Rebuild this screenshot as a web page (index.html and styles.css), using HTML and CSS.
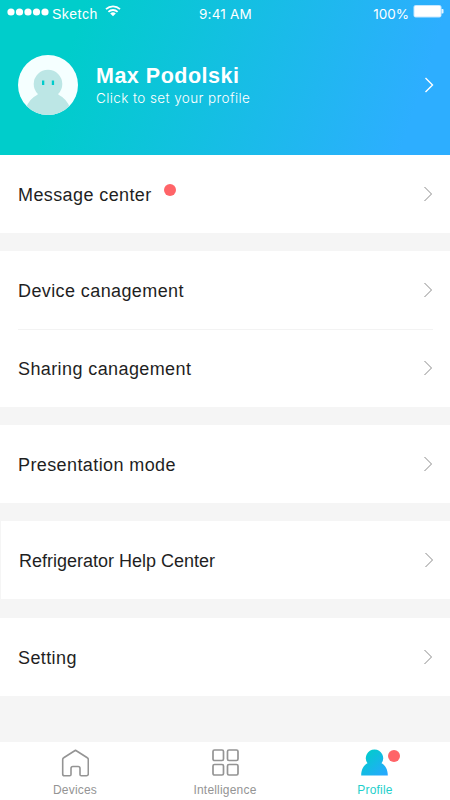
FILE: index.html
```
<!DOCTYPE html>
<html lang="en">

<head>
    <meta charset="utf-8">
    <title>Profile</title>
    <link rel="stylesheet" href="styles.css">
</head>

<body>
    <svg class="defs" width="0" height="0">
        <symbol id="arrow" viewBox="0 0 10 16">
            <path d="M1.500 1l7 7-7 7" fill="none" stroke="currentColor" />
        </symbol>
    </svg>

    <header class="header">
        <div class="status-bar">
            <div class="carrier">
                <svg width="42" height="8" viewBox="0 0 42 8" fill="#fff">
                    <circle cx="4" cy="4" r="3.6" />
                    <circle cx="12.5" cy="4" r="3.6" />
                    <circle cx="21" cy="4" r="3.6" />
                    <circle cx="29.5" cy="4" r="3.6" />
                    <circle cx="38" cy="4" r="3.6" />
                </svg>
                <span class="carrier-name">Sketch</span>
                <svg class="wifi" width="16" height="12" viewBox="0 0 16 12">
                    <path d="M1 4.1a10.3 10.3 0 0 1 14 0M3.4 6.8a6.8 6.8 0 0 1 9.2 0" fill="none" stroke="#fff" stroke-width="1.8" />
                    <path d="M5.2 8.6a4.2 4.2 0 0 1 5.6 0L8 11.3z" fill="#fff" />
                </svg>
            </div>
            <span class="time">9:41 AM</span>
            <div class="power">
                <span class="percent">100%</span>
                <svg width="31" height="13" viewBox="0 0 31 13">
                    <rect x="1" y=".5" width="27" height="11.5" rx="1.5" fill="#fff" stroke="#c5e7ff" />
                    <path d="M28.5 4h1.2q.8 0 .8.8v2.9q0 .8-.8.8h-1.2z" fill="#e3f4ff" />
                </svg>
            </div>
        </div>

        <div class="user">
            <svg class="avatar" width="60" height="60" viewBox="0 0 60 60">
                <clipPath id="round"><circle cx="30" cy="30" r="30" /></clipPath>
                <circle cx="30" cy="30" r="30" fill="#f5ffff" />
                <g clip-path="url(#round)" fill="#bce6e5">
                    <circle cx="30" cy="29" r="14.3" />
                    <path d="M19 40q2-1 1-3h20q-1 2 1 3 8 4 11 13v7H8v-7q3-9 11-13z" />
                </g>
                <path d="M24 25.500h2.300v4.500H24zM33.800 25.500h2.300v4.500h-2.300z" fill="#00cccb" />
            </svg>
            <div class="user-text">
                <h1>Max Podolski</h1>
                <p>Click to set your profile</p>
            </div>
            <svg class="arrow" width="10" height="16"><use href="#arrow" /></svg>
        </div>
    </header>

    <main class="menu">
        <section class="group">
            <div class="row">
                <span>Message center</span>
                <i class="dot"></i>
                <svg class="arrow" width="10" height="16"><use href="#arrow" /></svg>
            </div>
        </section>
        <section class="group">
            <div class="row">
                <span>Device canagement</span>
                <svg class="arrow" width="10" height="16"><use href="#arrow" /></svg>
            </div>
            <div class="row">
                <span>Sharing canagement</span>
                <svg class="arrow" width="10" height="16"><use href="#arrow" /></svg>
            </div>
        </section>
        <section class="group">
            <div class="row">
                <span>Presentation mode</span>
                <svg class="arrow" width="10" height="16"><use href="#arrow" /></svg>
            </div>
        </section>
        <section class="group help">
            <div class="row">
                <span>Refrigerator Help Center</span>
                <svg class="arrow" width="10" height="16"><use href="#arrow" /></svg>
            </div>
        </section>
        <section class="group">
            <div class="row">
                <span>Setting</span>
                <svg class="arrow" width="10" height="16"><use href="#arrow" /></svg>
            </div>
        </section>
    </main>

    <nav class="tabs">
        <div class="tab">
            <svg width="28" height="28" viewBox="0 0 28 28" fill="none" stroke="#949494" stroke-width="1.6" stroke-linejoin="round">
                <path d="M14.5 1.3L26.3 8.8q1 .6 1 1.7v14.4q0 1.8-1.8 1.8h-5.2q-1.3 0-1.3-1.3v-6q0-1.9-1.9-1.9h-5.200q-1.900 0-1.900 1.900v6q0 1.300-1.300 1.300H3.500q-1.800 0-1.800-1.800V10.500q0-1.100 1-1.700z" />
            </svg>
            <span>Devices</span>
        </div>
        <div class="tab">
            <svg width="28" height="28" viewBox="0 0 28 28" fill="none" stroke="#949494" stroke-width="1.7">
                <rect x="2" y="1" width="10.5" height="10.5" rx="1.5" />
                <rect x="16.5" y="1" width="10.5" height="10.5" rx="1.5" />
                <rect x="2" y="15.5" width="10.5" height="10.5" rx="1.5" />
                <rect x="16.5" y="15.5" width="10.5" height="10.5" rx="1.5" />
            </svg>
            <span>Intelligence</span>
        </div>
        <div class="tab active">
            <svg width="28" height="28" viewBox="0 0 28 28">
                <linearGradient id="person" x1="0.1" y1="0.1" x2="0.9" y2="1">
                    <stop offset="0" stop-color="#00cdca" />
                    <stop offset="1" stop-color="#27a8ff" />
                </linearGradient>
                <path d="M13.500.500a8.700 8.700 0 0 1 7 13.800c4 2 6.300 6.500 6.300 12.200H.2c0-5.700 2.300-10.200 6.300-12.200A8.700 8.700 0 0 1 13.500.500z" fill="url(#person)" />
            </svg>
            <span>Profile</span>
            <i class="dot badge"></i>
        </div>
    </nav>
</body>

</html>
```
FILE: styles.css
```
* {
    box-sizing: border-box;
}

body {
    margin: 0;
    height: 800px;
    display: flex;
    flex-direction: column;
    overflow: hidden;
    background-color: #f5f5f5;
    font-family: "Liberation Sans", Arial, sans-serif;
    color: #1f1f1f;
}

.defs {
    position: absolute;
}

.header {
    height: 154.5px;
    flex: none;
    background: linear-gradient(108deg, #00cdcb 17%, #2daeff 90%);
    color: #fff;
}

.status-bar {
    display: grid;
    grid-template-columns: 1fr auto 1fr;
    height: 27px;
    padding: 0 6px 0 7px;
    align-items: center;
    font-family: Inter, sans-serif;
    font-size: 13.5px;
}

.carrier,
.power {
    display: flex;
    align-items: center;
}

.carrier svg {
    margin-top: -4px;
}

.carrier-name {
    margin-left: 3px;
    font-family: "Liberation Sans", sans-serif;
    font-size: 14px;
    letter-spacing: 0.5px;
}

.carrier .wifi {
    margin: -6px 0 0 7px;
}

.time {
    letter-spacing: 0.2px;
}

.power {
    justify-content: flex-end;
    gap: 4px;
}

.power svg {
    margin-top: -4px;
}

.user {
    display: flex;
    align-items: center;
    padding: 0 16px 0 18px;
    margin-top: 28px;
}

.user-text {
    margin: 2px 0 0 18px;
}

h1 {
    margin: 0;
    font-size: 21.5px;
    line-height: 24px;
    letter-spacing: 0.5px;
}

p {
    margin: 0;
    font-family: Inter, sans-serif;
    font-size: 13.5px;
    font-weight: 300;
    line-height: 20px;
    letter-spacing: 0.4px;
}

.arrow {
    margin-left: auto;
    color: #8c8c8c;
}

.user .arrow {
    color: #fff;
    stroke-width: 1.4;
}

.menu {
    display: flex;
    flex-direction: column;
    gap: 18px;
    flex: 1;
}

.group {
    background-color: #fff;
}

.row {
    display: flex;
    align-items: center;
    height: 78px;
    margin: 0 17px 0 18px;
    font-size: 18px;
    letter-spacing: 0.4px;
}

.row span {
    margin-top: 3px;
}

.row + .row {
    border-top: 1px solid #f3f3f3;
}

.dot {
    width: 12px;
    height: 12px;
    border-radius: 50%;
    background-color: #ff6468;
}

.row .dot {
    margin: -7px 0 0 12px;
}

.help {
    margin: 0 0 1px 1px;
}

.help .row {
    margin-right: 16px;
    letter-spacing: 0;
}

.tabs {
    display: grid;
    grid-template-columns: repeat(3, 1fr);
    height: 58px;
    background-color: #fff;
}

.tab {
    position: relative;
    display: flex;
    flex-direction: column;
    align-items: center;
    padding-top: 7px;
    font-size: 12px;
    line-height: 14px;
    letter-spacing: 0.2px;
    color: #949494;
}

.tab span {
    margin-top: 6px;
}

.active {
    color: #1fcfcb;
}

.badge {
    position: absolute;
    top: 8px;
    right: 50px;
}
```
